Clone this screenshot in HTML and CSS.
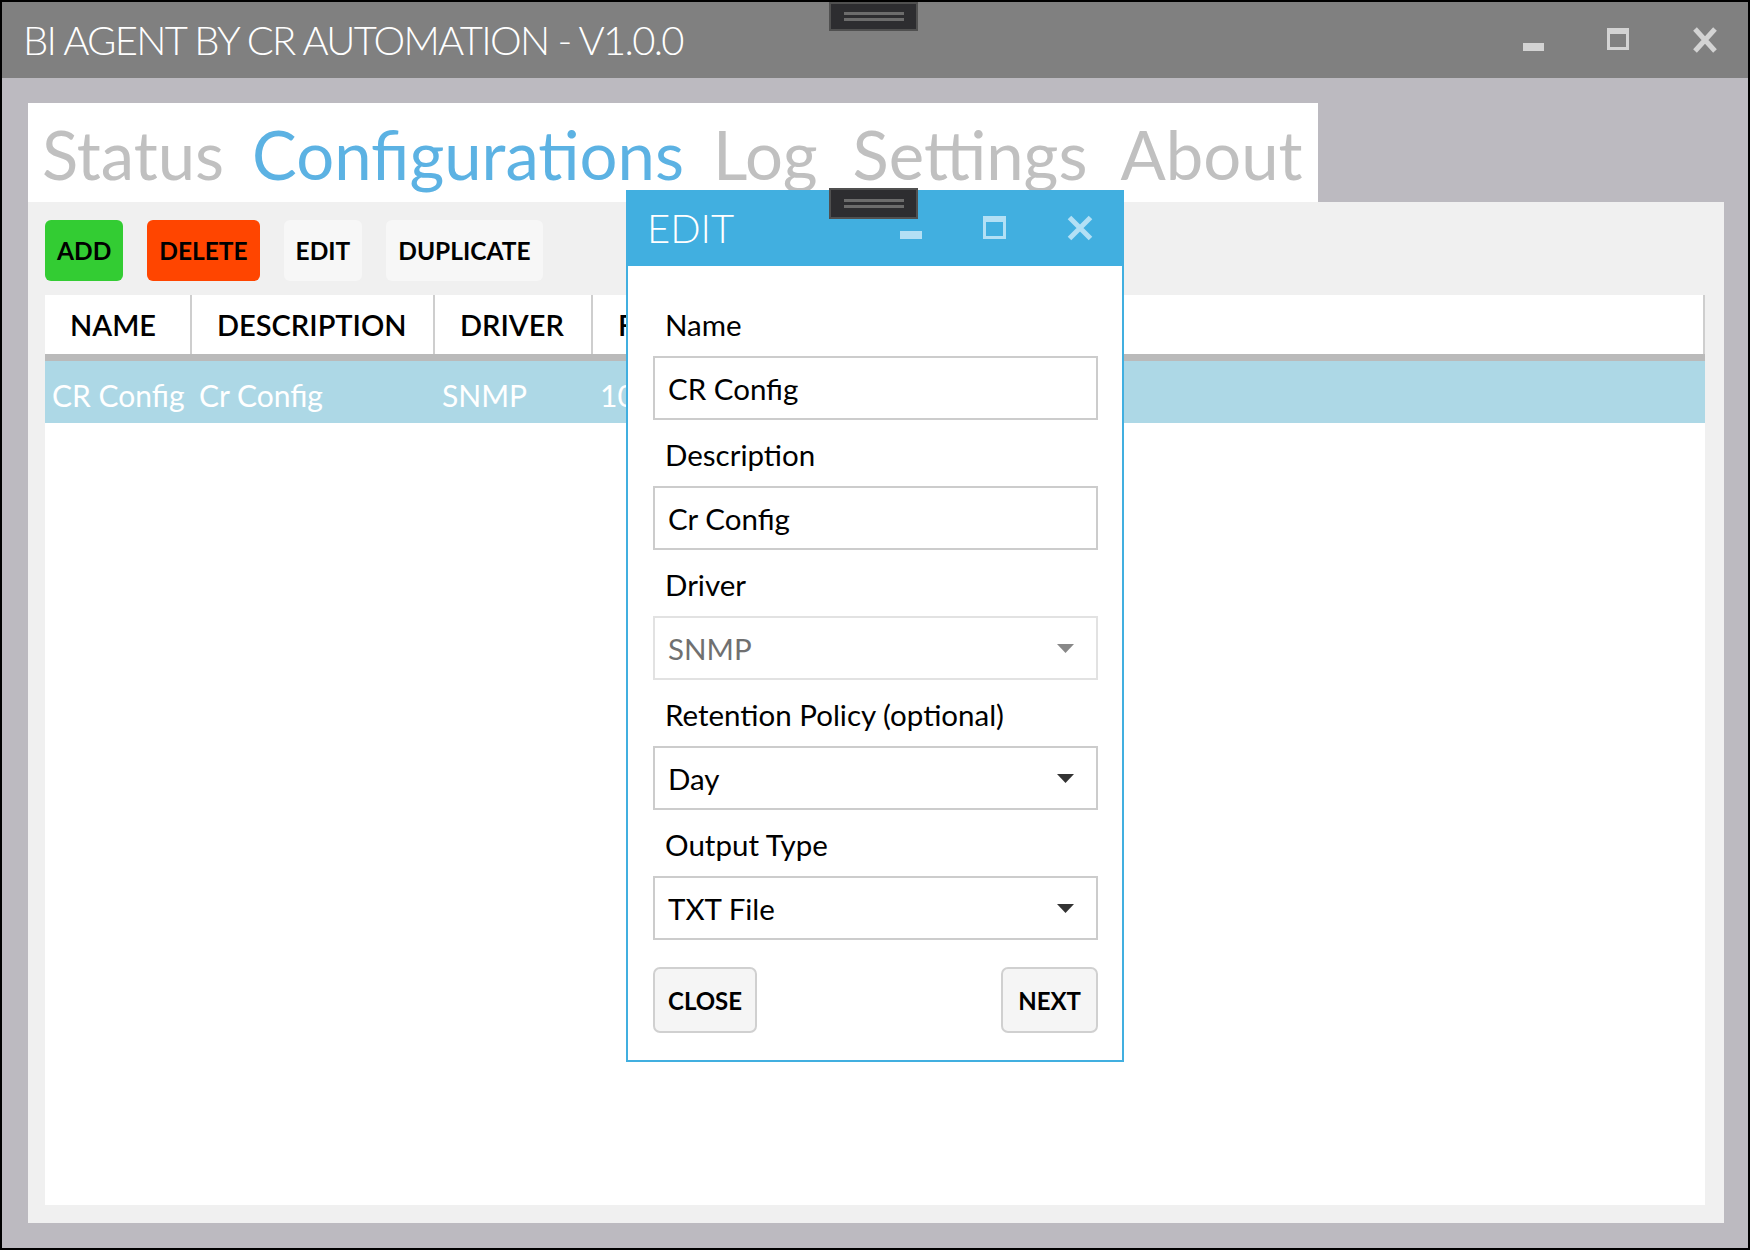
FILE: index.html
```html
<!DOCTYPE html>
<html>
<head>
<meta charset="utf-8">
<title>BI Agent</title>
<link rel="stylesheet" href="styles.css">
</head>
<body>
<div class="window">
  <header class="titlebar">
    <div class="title">BI AGENT BY CR AUTOMATION - V1.0.0</div>
    <div class="controls">
      <svg width="22" height="26" viewBox="0 0 22 26"><rect x="0" y="16" width="21" height="8"/></svg>
      <svg width="23" height="26" viewBox="0 0 23 26"><path fill-rule="evenodd" d="M0 1H22V23H0Z M3 7V20H19V7Z"/></svg>
      <svg width="26" height="26" viewBox="0 0 26 26"><path class="x" d="M3 2L23 24M23 2L3 24"/></svg>
    </div>
    <div class="grip"><span></span><span></span></div>
  </header>

  <main class="main">
    <nav class="tabs">
      <span>Status</span>
      <span class="active">Configurations</span>
      <span>Log</span>
      <span class="tab-settings">Settings</span>
      <span class="tab-about">About</span>
    </nav>
    <section class="panel">
      <div class="toolbar">
        <div class="btn btn-add">ADD</div>
        <div class="btn btn-delete">DELETE</div>
        <div class="btn">EDIT</div>
        <div class="btn">DUPLICATE</div>
      </div>
      <div class="grid">
        <div class="grid-head">
          <div>NAME</div>
          <div>DESCRIPTION</div>
          <div>DRIVER</div>
          <div>FREQUENCY</div>
        </div>
        <div class="grid-row">
          <div>CR Config</div>
          <div>Cr Config</div>
          <div>SNMP</div>
          <div>10000</div>
        </div>
      </div>
    </section>
  </main>

  <div class="dialog">
    <div class="dlg-title">
      <div class="dlg-name">EDIT</div>
      <div class="dlg-controls">
        <svg width="22" height="26" viewBox="0 0 22 26"><rect x="0" y="16" width="22" height="8"/></svg>
        <svg width="23" height="26" viewBox="0 0 23 26"><path fill-rule="evenodd" d="M0 1H23V24H0Z M3 7V21H20V7Z"/></svg>
        <svg width="26" height="26" viewBox="0 0 26 26"><path class="x" d="M2.5 2.5L23.5 23.5M23.5 2.5L2.5 23.5"/></svg>
      </div>
      <div class="grip dlg-grip"><span></span><span></span></div>
    </div>
    <div class="dlg-body">
      <div class="field">
        <label>Name</label>
        <div class="input">CR Config</div>
      </div>
      <div class="field">
        <label>Description</label>
        <div class="input">Cr Config</div>
      </div>
      <div class="field">
        <label>Driver</label>
        <div class="input select disabled">SNMP<svg width="17" height="9" viewBox="0 0 17 9"><polygon points="0,0 17,0 8.5,9"/></svg></div>
      </div>
      <div class="field">
        <label>Retention Policy (optional)</label>
        <div class="input select">Day<svg width="17" height="9" viewBox="0 0 17 9"><polygon points="0,0 17,0 8.5,9"/></svg></div>
      </div>
      <div class="field">
        <label>Output Type</label>
        <div class="input select">TXT File<svg width="17" height="9" viewBox="0 0 17 9"><polygon points="0,0 17,0 8.5,9"/></svg></div>
      </div>
      <div class="actions">
        <div class="dbtn">CLOSE</div>
        <div class="dbtn dbtn-next">NEXT</div>
      </div>
    </div>
  </div>
</div>
</body>
</html>
```

FILE: styles.css
```css
* { box-sizing: border-box; }

body {
  margin: 0;
  background: #000;
  font-family: Lato, "Open Sans", "DejaVu Sans", sans-serif;
}

.window {
  position: relative;
  width: 1750px;
  height: 1250px;
  border: 2px solid #000;
  display: flex;
  flex-direction: column;
  background: #bcbac0;
}

/* ---------- title bar ---------- */
.titlebar {
  position: relative;
  height: 76px;
  flex: none;
  background: #808080;
  display: flex;
  align-items: flex-start;
}

.title {
  color: #fff;
  font-weight: 300;
  font-size: 40px;
  letter-spacing: -1.7px;
  line-height: 76px;
  padding-left: 21px;
  white-space: nowrap;
}

.controls {
  margin-left: auto;
  margin-top: 25px;
  margin-right: 30px;
  display: flex;
  gap: 62px;
}

.controls svg { display: block; fill: #d3d3d3; }
.controls .x { stroke: #d3d3d3; stroke-width: 5; fill: none; }

.grip {
  position: absolute;
  left: 827px;
  top: 0;
  width: 89px;
  height: 29px;
  background: #2d2d30;
  border: 2px solid #505050;
  display: flex;
  flex-direction: column;
  align-items: center;
  justify-content: center;
  gap: 3px;
}

.grip span {
  display: block;
  width: 60px;
  height: 3px;
  background: #6c6c6c;
}

/* ---------- main ---------- */
.main {
  flex: 1;
  padding: 25px 24px 25px 26px;
  display: flex;
  flex-direction: column;
}

.tabs {
  width: 1290px;
  height: 99px;
  flex: none;
  background: #fff;
  display: flex;
  gap: 29px;
  padding: 4px 0 0 14px;
  font-size: 67px;
  line-height: 95px;
  color: #c0c0c0;
  white-space: nowrap;
}

.tabs .active { color: #5cb2e3; margin-left: -1px; }
.tabs .tab-settings { margin-left: 6px; }
.tabs .tab-about { margin-left: 4px; }

.panel {
  flex: 1;
  background: #f0f0f0;
  padding: 18px 19px 18px 17px;
  display: flex;
  flex-direction: column;
  gap: 14px;
}

.toolbar {
  display: flex;
  gap: 24px;
  height: 61px;
  flex: none;
}

.btn {
  height: 61px;
  padding: 0 12px;
  border-radius: 6px;
  font-weight: 700;
  font-size: 24.5px;
  display: flex;
  align-items: center;
  background: #f7f7f7;
  color: #000;
}

.btn-add { background: #33cc33; }
.btn-delete { background: #ff4500; }

.grid {
  flex: 1;
  background: #fff;
}

.grid-head,
.grid-row {
  display: grid;
  grid-template-columns: 147px 243px 158px 1fr;
}

.grid-head {
  height: 66px;
  border-bottom: 7px solid #bababa;
}

.grid-head div {
  border-right: 2px solid #cecece;
  font-weight: 600;
  font-size: 29px;
  padding-left: 25px;
  display: flex;
  align-items: center;
  color: #000;
}

.grid-row {
  height: 62px;
  background: #add8e6;
  color: #fff;
  font-size: 30px;
}

.grid-row div {
  padding: 5px 0 0 7px;
  display: flex;
  align-items: center;
  white-space: nowrap;
  overflow: hidden;
}

/* ---------- dialog ---------- */
.dialog {
  position: absolute;
  left: 624px;
  top: 188px;
  width: 498px;
  height: 872px;
  border: 2px solid #41afe0;
  background: #fff;
  display: flex;
  flex-direction: column;
}

.dlg-title {
  position: relative;
  height: 74px;
  flex: none;
  background: #41afe0;
  display: flex;
  align-items: flex-start;
}

.dlg-name {
  color: #fff;
  font-weight: 300;
  font-size: 40px;
  line-height: 72px;
  padding-left: 19px;
}

.dlg-controls {
  margin-left: auto;
  margin-top: 23px;
  margin-right: 29px;
  display: flex;
  gap: 61px;
}

.dlg-controls svg { display: block; fill: #b3e0f5; }
.dlg-controls .x { stroke: #b3e0f5; stroke-width: 5; fill: none; }

.dlg-grip {
  left: 201px;
  top: -4px;
  height: 31px;
}

.dlg-body {
  padding: 39px 24px 0 25px;
  display: flex;
  flex-direction: column;
}

.field { margin-bottom: 15px; }

.field label {
  display: block;
  font-size: 29.5px;
  line-height: 40px;
  padding-left: 12px;
  color: #000;
}

.input {
  height: 64px;
  margin-top: 11px;
  border: 2px solid #cccccc;
  font-size: 29.5px;
  padding: 0 22px 0 13px;
  display: flex;
  align-items: center;
  color: #000;
}

.select svg {
  margin-left: auto;
  fill: #333;
}

.select.disabled {
  border-color: #e2e2e2;
  color: #707070;
}

.select.disabled svg { fill: #888; }

.actions {
  margin-top: 12px;
  display: flex;
  justify-content: space-between;
}

.dbtn {
  height: 66px;
  border: 2px solid #d0d0d0;
  border-radius: 7px;
  background: #f5f5f5;
  font-weight: 700;
  font-size: 24px;
  padding: 0 13px;
  display: flex;
  align-items: center;
  color: #000;
}

.dbtn-next { padding: 0 15px; }
```
